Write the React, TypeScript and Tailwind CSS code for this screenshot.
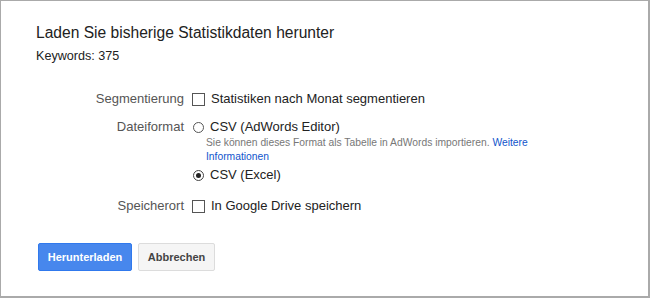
export default function App() {
  return (
    <div
      className="w-[650px] h-[298px] bg-white border-t border-l border-r-2 border-b-2 border-[#aaaaaa] text-[#222]"
      style={{ fontFamily: '"Liberation Sans", Arial, sans-serif' }}
    >
      <div className="pl-[35px] pt-[22px]">
        <h1 className="text-[15.6px] leading-[20px] text-[#222]">Laden Sie bisherige Statistikdaten herunter</h1>
        <p className="mt-[5px] text-[12.6px] leading-[16px] text-[#222]">Keywords: 375</p>
      </div>

      <div className="grid grid-cols-[148px_1fr] gap-x-[8px] pl-[35px] mt-[27px] text-[13px] leading-[16px]">
        <div className="text-right text-[#555]">Segmentierung</div>
        <label className="flex items-center gap-[6px]">
          <span className="w-[13px] h-[13px] border border-[#555] bg-white" />
          <span>Statistiken nach Monat segmentieren</span>
        </label>

        <div className="text-right text-[#555] mt-[12px]">Dateiformat</div>
        <div className="mt-[12px]">
          <label className="flex items-center gap-[6px]">
            <span className="ml-[1px] w-[11px] h-[11px] rounded-full border border-[#555] bg-white" />
            <span>CSV (AdWords Editor)</span>
          </label>
          <p className="ml-[14px] mt-[1px] w-[330px] text-[10.3px] leading-[14px] text-[#777]">
            Sie können dieses Format als Tabelle in AdWords importieren.{" "}
            <a className="text-[#15c]">Weitere Informationen</a>
          </p>
          <label className="flex items-center gap-[6px] mt-[3px]">
            <span className="ml-[1px] w-[11px] h-[11px] rounded-full border border-[#444] bg-white flex items-center justify-center">
              <span className="w-[5px] h-[5px] rounded-full bg-[#222]" />
            </span>
            <span>CSV (Excel)</span>
          </label>
        </div>

        <div className="text-right text-[#555] mt-[15px]">Speicherort</div>
        <label className="flex items-center gap-[6px] mt-[15px]">
          <span className="w-[13px] h-[13px] border border-[#555] bg-white" />
          <span>In Google Drive speichern</span>
        </label>
      </div>

      <div className="flex gap-[6px] pl-[37px] mt-[29px]">
        <button className="w-[94px] h-[28px] rounded-[2px] bg-[#4787ed] border border-[#3079ed] text-white text-[11px] font-bold">
          Herunterladen
        </button>
        <button className="w-[77px] h-[28px] rounded-[2px] bg-[#f5f5f5] border border-[#dcdcdc] text-[#444] text-[11px] font-bold">
          Abbrechen
        </button>
      </div>
    </div>
  );
}
